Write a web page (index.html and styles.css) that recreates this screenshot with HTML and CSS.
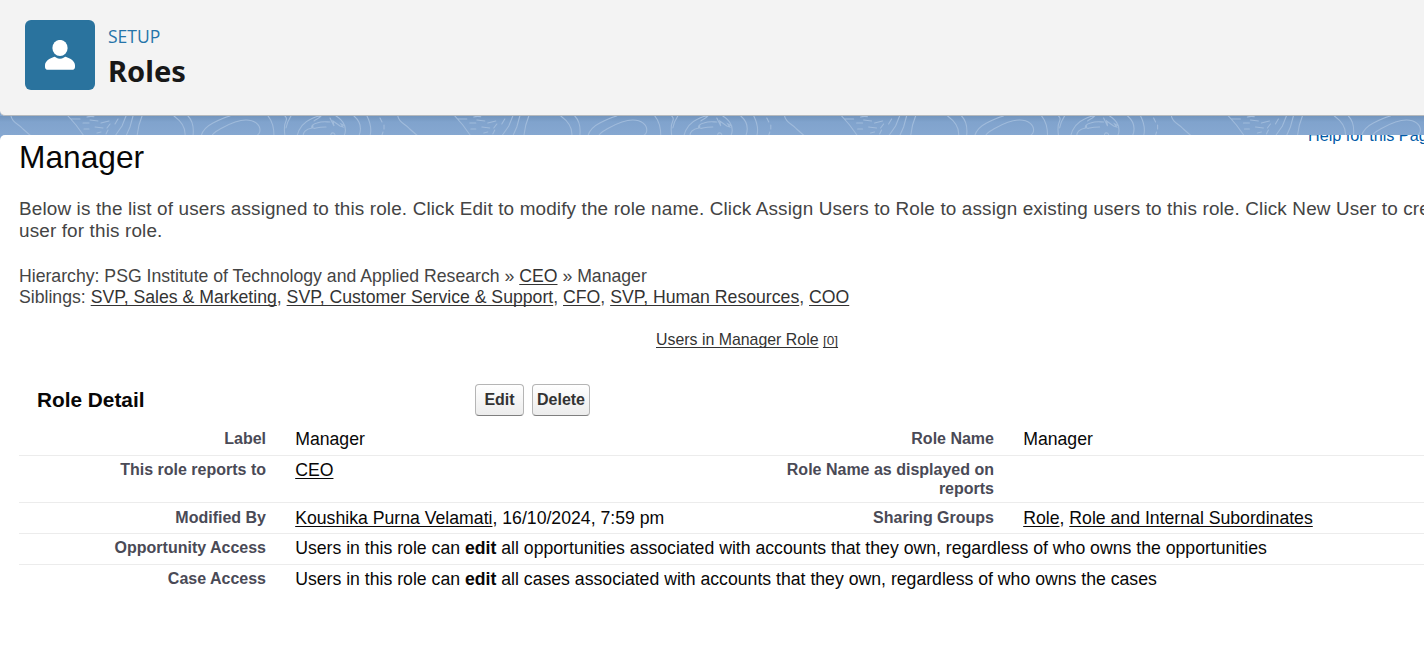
FILE: index.html
```html
<!DOCTYPE html>
<html lang="en">
<head>
<meta charset="utf-8">
<title>Roles</title>
<link rel="stylesheet" href="styles.css">
</head>
<body>
<header class="page-header">
  <div class="header-icon">
    <svg width="30" height="30" viewBox="0 0 30 30" fill="#fff"><ellipse cx="15" cy="8" rx="7.6" ry="8.1"/><path d="M9.4 16.7c.8 0 2.8 2.1 5.6 2.1s4.800-2.100 5.600-2.100c4.900 1.700 9.400 4.400 9.400 8.500v1.700c0 1.700-1.200 2.900-2.900 2.900H2.900C1.200 29.800 0 28.600 0 26.900v-1.700c0-4.100 4.500-6.800 9.400-8.500z"/></svg>
  </div>
  <div class="header-text">
    <div class="eyebrow">SETUP</div>
    <h1 class="header-title">Roles</h1>
  </div>
</header>
<svg class="band" width="1424" height="24" viewBox="0 0 1424 24">
  <defs>
    <linearGradient id="shade" x1="0" y1="0" x2="0" y2="1"><stop offset="0" stop-color="#7395bd"/><stop offset=".25" stop-color="#80a3cd"/><stop offset="1" stop-color="#88a9d2"/></linearGradient>
    <g id="contours" fill="none" stroke="#a0bbdb" stroke-width="1.1" stroke-linecap="round">
      <path d="M11 0c1 7 8 8 12 13l8 7M68 0l8 9 8 11M71 3h9M83 7h6M84 13h5M87 1c2-.7 5-.7 7-.3M90 4l8 1M95 11l8 1M97 17l4-1M101 7l8-2M107 12l3-4M115 8l3-5M106 18l2-4M126 0l-4 10-7 10M133 0l-3 11-4 9M142 0l-3 9-2 11"/>
      <path d="M174 0c7 5 12 11 11 20M188 0c5 5 6 12 5 20M201 20c2-7 6-10 12-13 8-4 13-6 17-7M212 20c1-4 5-5 10-8 9-5 17-8 24-8 9 0 14 5 14 10 0 3-2 5-4 6M268 0c5 6 6 13 6 20M285 0c1 1 2 3 1 5-2 4-2 9-1 15M291 0c-2 3-4 6-5 12"/>
      <path d="M297 20c2-8 7-14 14-17 4-2 7-3 9-3M303 20c0-5 4-7 9-8-1-2 1-4 5-5 6-2 9-1 13-1M321 0c-2 2-4 3-7 5M313 10c-1 2 1 3 3 2 4-1 6-1 10-1M330 2l4 8-1-5 7 5 3 1-2-3 4 2M336 0c7 4 12 12 8 20M331 20c-1-4 4-4 4-1M354 0c6 5 8 12 5 20M367 0c3 6 5 13 3 20M380 2l2 4M384 9v4M383 16l-1 3"/>
    </g>
  </defs>
  <rect width="1424" height="24" fill="url(#shade)"/>
  <use href="#contours"/><use href="#contours" x="386.8"/><use href="#contours" x="773.6"/><use href="#contours" x="1160.4"/>
</svg>
<main class="content">
  <a class="help-link">Help for this Page</a>
  <h2 class="role-title">Manager</h2>
  <p class="intro">Below is the list of users assigned to this role. Click Edit to modify the role name. Click Assign Users to Role to assign existing users to this role. Click New User to create a<br>user for this role.</p>
  <div class="hierarchy">
    <div class="crumbs">Hierarchy: PSG Institute of Technology and Applied Research » <a class="link">CEO</a> » Manager</div>
    <div class="siblings">Siblings: <a class="link">SVP, Sales &amp; Marketing</a>, <a class="link">SVP, Customer Service &amp; Support</a>, <a class="link">CFO</a>, <a class="link">SVP, Human Resources</a>, <a class="link">COO</a></div>
  </div>
  <div class="related"><a class="link">Users in Manager Role</a> <a class="link count">[0]</a></div>
  <div class="detail-head">
    <h3 class="detail-title">Role Detail</h3>
    <button class="btn btn-edit">Edit</button>
    <button class="btn btn-delete">Delete</button>
  </div>
  <div class="row row-first"><div class="label">Label</div><div class="value">Manager</div><div class="label">Role Name</div><div class="value">Manager</div></div>
  <div class="row row-tall"><div class="label">This role reports to</div><div class="value"><a class="link">CEO</a></div><div class="label">Role Name as displayed on reports</div><div class="value"></div></div>
  <div class="row row-modified"><div class="label">Modified By</div><div class="value"><a class="link">Koushika Purna Velamati</a>, 16/10/2024, 7:59 pm</div><div class="label">Sharing Groups</div><div class="value"><a class="link">Role</a>, <a class="link">Role and Internal Subordinates</a></div></div>
  <div class="row"><div class="label">Opportunity Access</div><div class="value wide">Users in this role can <b>edit</b> all opportunities associated with accounts that they own, regardless of who owns the opportunities</div></div>
  <div class="row row-last"><div class="label">Case Access</div><div class="value wide">Users in this role can <b>edit</b> all cases associated with accounts that they own, regardless of who owns the cases</div></div>
</main>
</body>
</html>
```
FILE: styles.css
```css
* { box-sizing: border-box; }
body { margin: 0; height: 649px; overflow: hidden; background: #84a6cf; font-family: "Liberation Sans", Arial, sans-serif; }
h1, h2, h3, p { margin: 0; }
.page-header { position: relative; display: flex; gap: 13px; height: 116px; padding: 20px 25px; background: #f3f3f3; border-bottom: 1px solid #b5b9bd; border-bottom-left-radius: 5px; }
.header-icon { display: grid; place-items: center; width: 70px; height: 70px; border-radius: 6px; background: #2a739e; }
.header-text { font-family: "Noto Sans", "Open Sans", sans-serif; }
.eyebrow { margin-top: 4px; font-family: "Open Sans", sans-serif; font-size: 17.5px; line-height: 24px; color: #2574a9; }
.header-title { margin-top: 5px; font-size: 29.1px; line-height: 36px; font-weight: 700; color: #181818; }
.band { display: block; margin-bottom: -5px; }
.content { position: relative; height: 514px; padding-left: 19px; overflow: hidden; background: #fff; border-top-left-radius: 5px; white-space: nowrap; }
.help-link { position: absolute; left: 1308px; top: -10px; font-size: 16.2px; line-height: 20px; color: #015ba7; }
.role-title { padding-top: 4px; font-size: 31.7px; line-height: 36px; font-weight: 400; color: #080707; }
.intro { margin-top: 23px; font-size: 18.9px; line-height: 22px; letter-spacing: .145px; color: #444; }
.hierarchy { margin-top: 24px; font-size: 17.66px; line-height: 21px; color: #444; }
.link { color: inherit; text-decoration: underline; text-decoration-thickness: 1px; text-underline-offset: 2px; text-decoration-skip-ink: none; }
.hierarchy .link, .related .link { color: #333; }
.related { margin: 21px 0 0 637px; font-size: 15.9px; line-height: 22px; }
.related .count { font-size: 13.6px; }
.detail-head { display: flex; align-items: center; height: 32px; margin-top: 32px; }
.detail-title { width: 456px; padding-left: 18px; font-size: 20.8px; line-height: 26px; color: #080707; }
.btn { height: 32px; margin-right: 8px; padding: 0; border: 1px solid #b5b5b5; border-bottom-color: #7f7f7f; border-radius: 4px; background: linear-gradient(#fff, #ececec); font: 700 16px "Liberation Sans", Arial, sans-serif; color: #333; }
.btn-edit { width: 49px; }
.btn-delete { width: 58px; }
.row { display: grid; grid-template-columns: 247px 481px 247px 430px; height: 31px; padding-top: 4px; border-bottom: 1px solid #ececec; }
.row-first { height: 40px; padding-top: 13px; }
.row-tall { height: 47px; }
.row-modified { padding-top: 5px; }
.row-last { border-bottom: 0; }
.label { font-size: 16px; line-height: 19px; font-weight: 700; color: #4a4a56; text-align: right; white-space: normal; }
.value { padding-left: 29.2px; font-size: 17.66px; line-height: 20px; color: #080707; }
.wide { grid-column: span 3; }
```
